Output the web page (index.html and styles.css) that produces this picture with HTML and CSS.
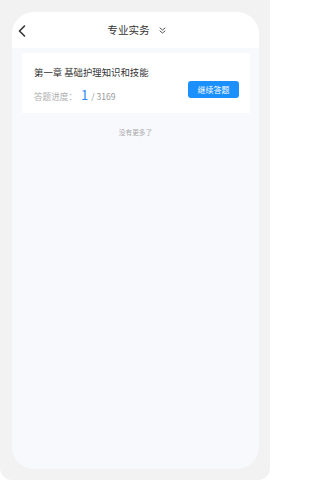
FILE: index.html
```html
<!DOCTYPE html>
<html lang="zh-CN">
<head>
<meta charset="utf-8">
<title>专业实务</title>
<link rel="stylesheet" href="styles.css">
</head>
<body>
<div class="frame">
  <div class="screen">
    <header class="nav">
      <div class="nav-left">
        <svg class="back" width="8" height="12" viewBox="0 0 8 12"><path d="M6.5 1 L1.5 6 L6.5 11" fill="none" stroke="#333" stroke-width="1.6" stroke-linecap="round" stroke-linejoin="round"/></svg>
      </div>
      <div class="nav-title">
        <span class="title">专业实务</span>
        <svg class="dd" width="7" height="7" viewBox="0 0 7 7"><path d="M1 1 L3.5 3 L6 1 M1 4 L3.5 6 L6 4" fill="none" stroke="#555" stroke-width="1" stroke-linecap="round" stroke-linejoin="round"/></svg>
      </div>
      <div class="nav-right"></div>
    </header>
    <section class="card">
      <div class="card-main">
        <div class="chapter">第一章 基础护理知识和技能</div>
        <div class="progress">
          <span class="plabel">答题进度：</span><span class="pnum">1</span><span class="ptotal">/ 3169</span>
        </div>
      </div>
      <button class="continue">继续答题</button>
    </section>
    <div class="nomore">没有更多了</div>
  </div>
</div>
</body>
</html>
```

FILE: styles.css
```css
html, body {
  margin: 0;
  padding: 0;
  background: #ffffff;
}
body {
  font-family: "Noto Sans CJK SC", "Noto Sans", sans-serif;
  width: 270px;
  height: 480px;
  overflow: hidden;
}
.frame {
  box-sizing: border-box;
  width: 270px;
  height: 480px;
  background: #f2f2f2;
  border-radius: 0 0 12px 12px;
  padding: 12px 11px 11px 12px;
}
.screen {
  height: 457px;
  background: #f8f9fd;
  border-radius: 22px;
  overflow: hidden;
  display: flex;
  flex-direction: column;
}
.nav {
  height: 36px;
  background: #ffffff;
  display: grid;
  grid-template-columns: 1fr auto 1fr;
  align-items: center;
  flex-shrink: 0;
}
.nav-left {
  padding-left: 6px;
  display: flex;
  align-items: center;
  padding-top: 1px;
}
.back { display: block; }
.nav-title {
  display: flex;
  align-items: center;
  gap: 9px;
  padding-left: 2px;
}
.title {
  font-size: 10.6px;
  line-height: 14px;
  color: #333333;
}
.dd { display: block; margin-top: 0px; }
.card {
  margin: 5px 9px 0 10px;
  background: #ffffff;
  padding: 12px 11px 10px 12px;
  display: flex;
  align-items: flex-end;
  justify-content: space-between;
}
.card-main {
  display: flex;
  flex-direction: column;
  gap: 8px;
}
.chapter {
  font-size: 9.4px;
  line-height: 14px;
  color: #333333;
}
.progress {
  display: flex;
  align-items: baseline;
  line-height: 16px;
  height: 16px;
}
.plabel {
  font-size: 8.6px;
  color: #b0b0b0;
}
.pnum {
  font-size: 13px;
  color: #2a8cf5;
  margin-left: 4px;
  margin-right: 3px;
}
.ptotal {
  font-size: 8.6px;
  color: #999999;
}
.continue {
  border: none;
  margin: 0 0 5px 0;
  padding: 0;
  width: 51px;
  height: 17px;
  border-radius: 3px;
  background: #1b8ffc;
  color: #ffffff;
  font-family: "Noto Sans CJK SC", "Noto Sans", sans-serif;
  font-size: 8px;
  line-height: 17px;
}
.nomore {
  margin-top: 14px;
  text-align: center;
  font-size: 6.7px;
  line-height: 10px;
  color: #aaaaaa;
}
```
